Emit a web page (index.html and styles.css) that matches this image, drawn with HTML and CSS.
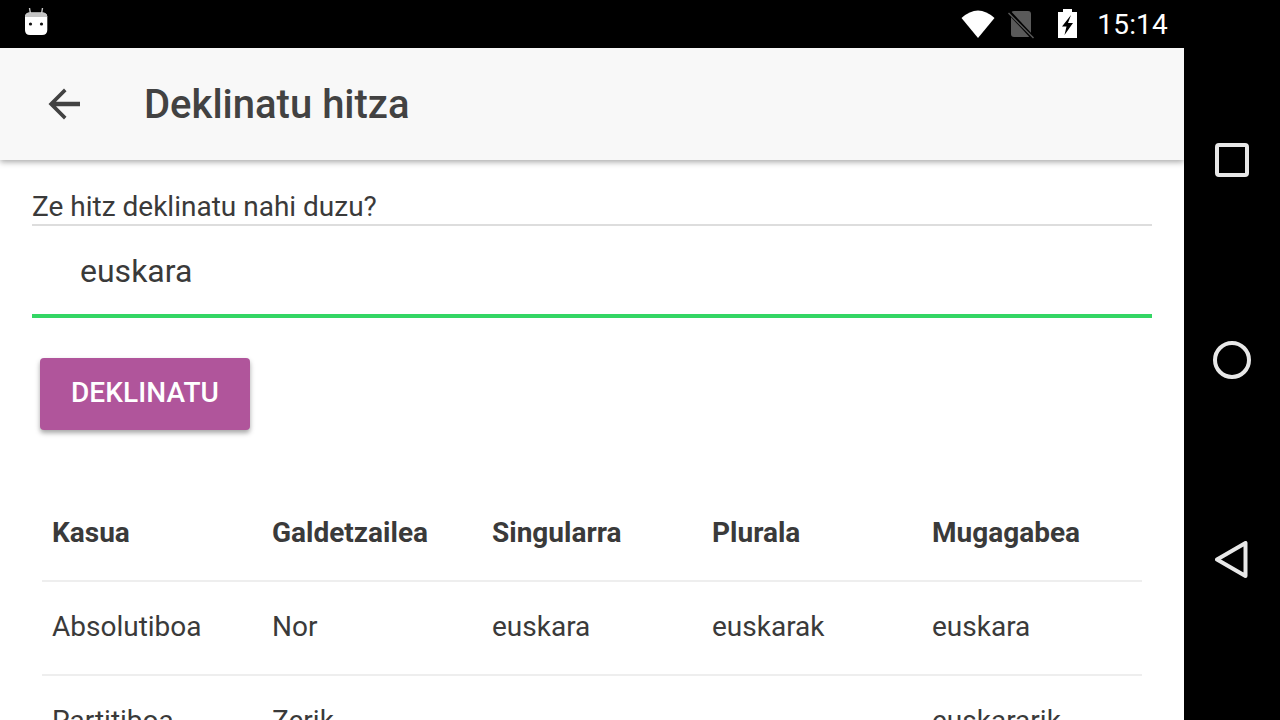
FILE: index.html
```html
<!DOCTYPE html>
<html>

<head>
    <meta charset="utf-8">
    <title>Deklinatu hitza</title>
    <link rel="stylesheet" href="styles.css">
</head>

<body>
    <div class="device">
        <div class="screen">
            <div class="statusbar">
                <svg class="status-app" width="24" height="48" viewBox="24 0 24 48">
                    <path d="M29.500 8 L30.500 14 M42.500 8 L41.500 14" stroke="#c4c4c4" stroke-width="1.400" fill="none" />
                    <path d="M25 17 Q25 12.500 30 12.500 H42 Q47.300 12.500 47.300 17 V30 Q47.300 35 42 35 H30 Q25 35 25 30 Z" fill="#fff" />
                    <path d="M25 17 Q25 12.500 30 12.500 H42 Q47.300 12.500 47.300 17 Z" fill="#c4c4c4" />
                    <circle cx="30.500" cy="24" r="1.600" fill="#111" />
                    <circle cx="41.500" cy="24" r="1.600" fill="#111" />
                </svg>
                <div class="status-right">
                    <svg class="wifi" width="34" height="48" viewBox="961 0 34 48">
                        <path d="M961.500 18 Q978 3 994.500 18 L978 38 Z" fill="#fff" />
                    </svg>
                    <svg class="nosim" width="26" height="48" viewBox="1008 0 26 48">
                        <path d="M1014 11 H1028 Q1031 11 1031 14 V34 Q1031 37 1028 37 H1014 Q1011 37 1011 34 V14 Q1011 11 1014 11 Z" fill="#5a5a5a" />
                        <path d="M1008 11 L1034 39" stroke="#000" stroke-width="4" />
                        <path d="M1008.500 13 L1033.500 38" stroke="#5a5a5a" stroke-width="1.400" />
                    </svg>
                    <svg class="battery" width="19" height="48" viewBox="1058 0 19 48">
                        <path d="M1063 9 H1072 V12 H1077 V38 H1058 V12 H1063 Z" fill="#fff" />
                        <path d="M1071 15 L1062 26.500 H1066.500 L1064.500 35 L1073 23 H1068 Z" fill="#000" />
                    </svg>
                    <span class="clock">15:14</span>
                </div>
            </div>

            <div class="appbar">
                <svg class="back" width="32" height="32" viewBox="0 0 32 32">
                    <path d="M32 13.800 H8 L18.500 3.300 L16 .500 L.500 16 L16 31.500 L18.500 28.700 L8 18.200 H32 Z" fill="#424242" />
                </svg>
                <span class="appbar-title">Deklinatu hitza</span>
            </div>

            <div class="content">
                <label class="field-label" for="word">Ze hitz deklinatu nahi duzu?</label>
                <div class="word-input" id="word">euskara</div>
                <button class="deklinatu">DEKLINATU</button>

                <table class="cases">
                    <tr>
                        <th>Kasua</th>
                        <th>Galdetzailea</th>
                        <th>Singularra</th>
                        <th>Plurala</th>
                        <th>Mugagabea</th>
                    </tr>
                    <tr>
                        <td>Absolutiboa</td>
                        <td>Nor</td>
                        <td>euskara</td>
                        <td>euskarak</td>
                        <td>euskara</td>
                    </tr>
                    <tr>
                        <td>Partitiboa</td>
                        <td>Zerik</td>
                        <td></td>
                        <td></td>
                        <td>euskararik</td>
                    </tr>
                </table>
            </div>
        </div>

        <div class="navbar">
            <svg width="34" height="34" viewBox="0 0 34 34">
                <rect x="2" y="2" width="30" height="30" rx="2" fill="none" stroke="#e8e8e8" stroke-width="4" />
            </svg>
            <svg width="40" height="40" viewBox="0 0 40 40">
                <circle cx="20" cy="20" r="17" fill="none" stroke="#e8e8e8" stroke-width="4" />
            </svg>
            <svg width="34" height="38" viewBox="0 0 34 38">
                <path d="M30.500 2 V35 L2 18.500 Z" fill="none" stroke="#e8e8e8" stroke-width="4" stroke-linejoin="round" />
            </svg>
        </div>
    </div>
</body>

</html>
```

FILE: styles.css
```css
html, body {
    margin: 0;
    height: 100%;
    overflow: hidden;
    background-color: #000;
}

.device {
    display: flex;
    width: 1280px;
    height: 720px;
    font-family: Roboto, "Liberation Sans", sans-serif;
}

.screen {
    width: 1184px;
    height: 720px;
    overflow: hidden;
    background-color: #fff;
}

/* Top status bar */
.statusbar {
    display: flex;
    justify-content: space-between;
    height: 48px;
    background-color: #000;
}

.status-app {
    margin-left: 24px;
}

.status-right {
    display: flex;
    align-items: center;
    padding-right: 16px;
}

.wifi {
    margin-right: 13px;
}

.nosim {
    margin-right: 24px;
}

.battery {
    margin-right: 20px;
}

.clock {
    color: #fff;
    font-size: 28px;
    letter-spacing: 0.2px;
}

/* App bar */
.appbar {
    display: flex;
    align-items: center;
    height: 112px;
    background-color: #f8f8f8;
    box-shadow: 0 2px 6px rgba(0, 0, 0, 0.35);
}

.back {
    margin-left: 48px;
}

.appbar-title {
    margin-left: 64px;
    color: #424242;
    font-size: 40px;
    font-weight: 500;
}

/* Form */
.content {
    padding: 28px 32px 0;
    color: #3a3a3a;
}

.field-label {
    display: block;
    height: 36px;
    border-bottom: 2px solid #ddd;
    font-size: 28px;
    line-height: 38px;
}

.word-input {
    height: 88px;
    padding-left: 48px;
    border-bottom: 4px solid #33d664;
    font-size: 32px;
    line-height: 90px;
}

.deklinatu {
    display: block;
    width: 210px;
    height: 72px;
    margin: 40px 0 0 8px;
    padding: 0 0 4px;
    border: none;
    border-radius: 4px;
    background-color: #b0559b;
    color: #fff;
    font-family: inherit;
    font-size: 28px;
    font-weight: 500;
    letter-spacing: 0.1px;
    box-shadow: 0 3px 5px rgba(0, 0, 0, 0.35);
}

/* Results table */
.cases {
    width: 1100px;
    margin: 56px 0 0 10px;
    border-collapse: collapse;
    table-layout: fixed;
    font-size: 28px;
    line-height: 32px;
}

.cases th,
.cases td {
    height: 90px;
    padding: 0 10px 2px;
    border-bottom: 2px solid #eee;
    text-align: left;
}

.cases th {
    height: 93px;
    padding-bottom: 1px;
    font-weight: 700;
}

/* Android nav buttons */
.navbar {
    display: flex;
    flex-direction: column;
    align-items: center;
    width: 96px;
    height: 720px;
    padding-top: 143px;
    box-sizing: border-box;
    background-color: #000;
}

.navbar svg:nth-child(2) {
    margin-top: 163px;
}

.navbar svg:nth-child(3) {
    margin-top: 161px;
}
```
